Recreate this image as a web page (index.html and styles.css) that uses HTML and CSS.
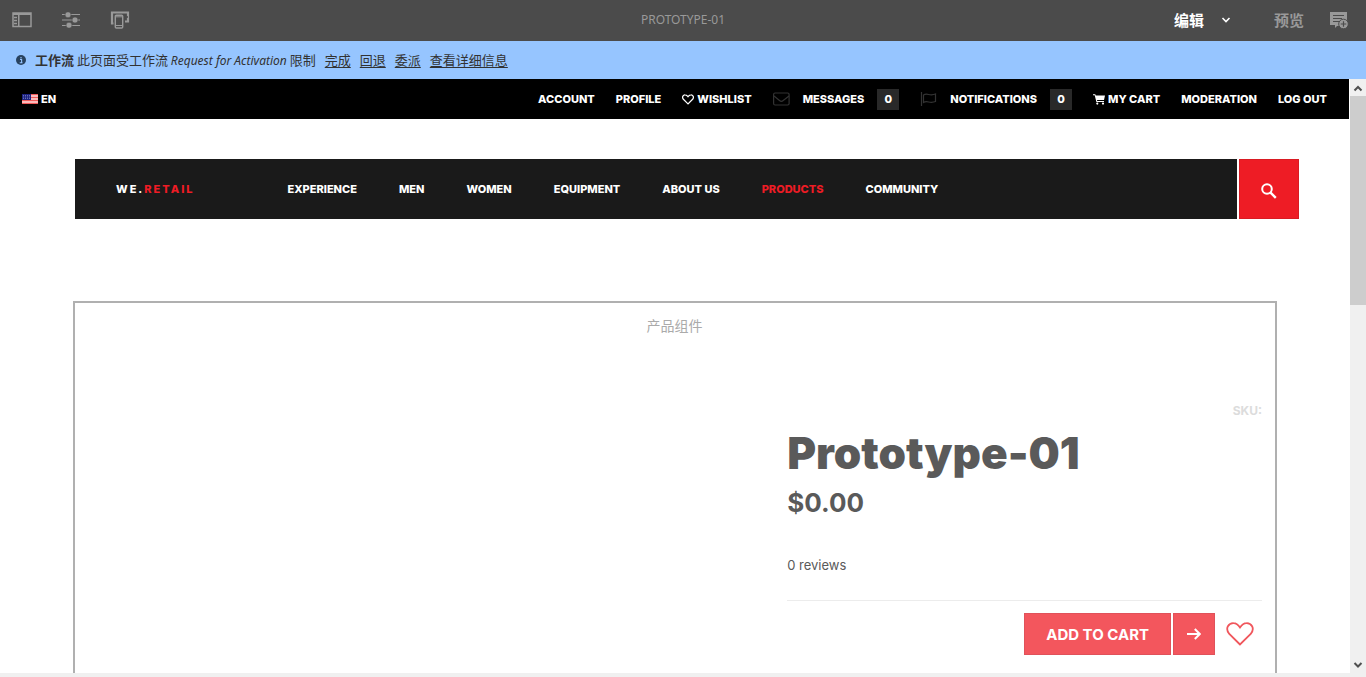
FILE: index.html
```html
<!DOCTYPE html>
<html lang="zh-CN">
<head>
<meta charset="utf-8">
<meta name="viewport" content="width=device-width, initial-scale=1">
<title>Prototype-01</title>
<link rel="stylesheet" href="styles.css">
</head>
<body>
<div class="editor">
  <header class="toolbar">
    <div class="tools">
      <button class="tool" type="button" aria-label="侧面板">
        <svg width="20" height="16" viewBox="0 0 20 16"><path d="M1 1h18v13.500H1z" fill="none" stroke="currentColor" stroke-width="1.500"/><path d="M1 1h18v2H1zM6 3h1.500v11H6z" fill="currentColor"/><path d="M2 5.500h3M2 8.500h3M2 11.500h3" stroke="currentColor" stroke-width="1.500"/></svg>
      </button>
      <button class="tool" type="button" aria-label="页面信息">
        <svg width="20" height="16" viewBox="0 0 20 16"><path d="M1 2.500h18M1 8h18M1 13.500h18" stroke="currentColor" stroke-width="1.200"/><g fill="currentColor" stroke="#4b4b4b" stroke-width=".6"><circle cx="7" cy="2.800" r="3"/><circle cx="14" cy="8" r="3"/><circle cx="8" cy="13.200" r="3"/></g></svg>
      </button>
      <button class="tool" type="button" aria-label="模拟器">
        <svg width="20" height="18" viewBox="0 0 20 18"><path d="M3.500 12.500H2v-11h16v9h-3" fill="none" stroke="currentColor" stroke-width="2.200"/><rect x="5.300" y="4.200" width="7.400" height="12.800" rx="1" fill="#4b4b4b" stroke="currentColor" stroke-width="1.400"/><path d="M5.500 5.800h7M5.500 14.500h7" stroke="currentColor" stroke-width="1"/><path d="M16 6h2" stroke="#4b4b4b" stroke-width="1.500"/></svg>
      </button>
    </div>
    <h1 class="page-name">PROTOTYPE-01</h1>
    <div class="modes">
      <button class="mode mode-active" type="button">编辑
        <svg width="10" height="6" viewBox="0 0 10 6"><path d="M1.500 1l3.500 3.500L8.500 1" fill="none" stroke="currentColor" stroke-width="1.600"/></svg>
      </button>
      <button class="mode" type="button">预览</button>
      <button class="tool" type="button" aria-label="注释">
        <svg width="20" height="18" viewBox="0 0 20 18"><path d="M1 1h17v8H14v6H8l-2 2v-3H1z" fill="currentColor"/><path d="M4 4.500h11M4 7.500h9M4 10.500h6" stroke="#4b4b4b" stroke-width="1.100"/><circle cx="14.500" cy="13" r="4.800" fill="currentColor" stroke="#4b4b4b"/><path d="M14.500 10.200v5.600M11.700 13h5.600" stroke="#4b4b4b" stroke-width="1.200"/></svg>
      </button>
    </div>
  </header>

  <div class="notice" role="status">
    <svg class="notice-icon" width="10" height="10" viewBox="0 0 10 10"><circle cx="5" cy="5" r="5" fill="#28425f"/><path d="M4 4.400h1.600V8M3.700 7.800h2.800M4.400 2.500h1.200" stroke="#96c5ff" stroke-width="1.100" fill="none"/></svg>
    <p class="notice-text"><strong>工作流</strong> 此页面受工作流 <em>Request for Activation</em> 限制</p>
    <a href="#complete">完成</a>
    <a href="#back">回退</a>
    <a href="#delegate">委派</a>
    <a href="#details">查看详细信息</a>
  </div>

  <div class="frame">
    <div class="site">
      <div class="account-bar">
        <a class="account-link language" href="#language">
          <svg width="16" height="10" viewBox="0 0 16 10"><path fill="#ffdcdc" d="M0 0h16v10H0z"/><path d="M0 .5h16M0 3.500h16M0 6.500h16M0 9.500h16" stroke="#f05a5a" stroke-width="1.500"/><path fill="#1d2280" d="M0 0h9v6H0z"/><path d="M1 1.500h7M1 3h7M1 4.500h7" stroke="#8890c8" stroke-width=".7" stroke-dasharray="1 1"/></svg>
          EN
        </a>
        <nav class="account-nav" aria-label="Account">
          <a class="account-link" href="#account">ACCOUNT</a>
          <a class="account-link" href="#profile">PROFILE</a>
          <a class="account-link" href="#wishlist">
            <svg width="12" height="11" viewBox="0 0 26 23"><path d="M13 21L3 11C-1 6 3 1 7 1.500c3 0 5 2.500 6 4 1-1.500 3-4 6-4 4-.5 8 4.500 4 9.500z" fill="none" stroke="currentColor" stroke-width="2.600"/></svg>
            WISHLIST
          </a>
          <a class="account-link counted" href="#messages">
            <svg class="dim" width="17" height="14" viewBox="0 0 17 14"><rect x=".6" y="1" width="15.500" height="12" rx="1.500" fill="none" stroke="currentColor" stroke-width="1.200"/><path d="M1 4l5.500 4.500c1.200 1 2.500 1 3.700 0L16 4" fill="none" stroke="currentColor" stroke-width="1.200"/></svg>
            MESSAGES <span class="count">0</span>
          </a>
          <a class="account-link counted" href="#notifications">
            <svg class="dim" width="17" height="14" viewBox="0 0 17 14"><path d="M1.500 0v14M3.500 3c4-2.500 6 1.500 12-1v7.500c-6 2.500-8-1.500-12 1z" fill="none" stroke="currentColor" stroke-width="1.200"/></svg>
            NOTIFICATIONS <span class="count">0</span>
          </a>
          <a class="account-link" href="#cart">
            <svg width="12" height="11" viewBox="0 0 12 11"><path d="M0 .3h2.300l.4 1.200H12L11 6H4l.2 1H11v1H3.400L1.700 1.300H0z" fill="currentColor"/><circle cx="4.300" cy="9.600" r="1.100" fill="currentColor"/><circle cx="10" cy="9.600" r="1.100" fill="currentColor"/></svg>
            MY CART
          </a>
          <a class="account-link" href="#moderation">MODERATION</a>
          <a class="account-link" href="#logout">LOG OUT</a>
        </nav>
      </div>

      <div class="masthead">
        <div class="menu-bar">
          <a class="brand" href="#home">WE.<span class="brand-accent">RETAIL</span></a>
          <nav class="menu" aria-label="Main">
            <a href="#experience">EXPERIENCE</a>
            <a href="#men">MEN</a>
            <a href="#women">WOMEN</a>
            <a href="#equipment">EQUIPMENT</a>
            <a href="#about">ABOUT US</a>
            <a class="current" href="#products">PRODUCTS</a>
            <a href="#community">COMMUNITY</a>
          </nav>
        </div>
        <button class="search" type="button" aria-label="Search">
          <svg width="16" height="16" viewBox="0 0 16 16"><circle cx="6" cy="6" r="4.800" fill="none" stroke="currentColor" stroke-width="2"/><path d="M9.300 9.300l5.500 5.500" stroke="currentColor" stroke-width="2.400"/></svg>
        </button>
      </div>

      <main class="product">
        <p class="component-label">产品组件</p>
        <div class="details">
          <p class="sku">SKU:</p>
          <h2 class="name">Prototype-01</h2>
          <p class="price">$0.00</p>
          <p class="reviews">0 reviews</p>
          <div class="actions">
            <button class="action add" type="button">ADD TO CART</button>
            <button class="action go" type="button" aria-label="Go to cart">
              <svg width="14" height="12" viewBox="0 0 14 12"><path d="M0 6h12.500M7.800 1l5 5-5 5" fill="none" stroke="currentColor" stroke-width="2"/></svg>
            </button>
            <button class="favourite" type="button" aria-label="Add to wishlist">
              <svg width="28" height="24" viewBox="0 0 28 24"><path d="M14 22.500L3.300 12C-1.500 6 3 1 7.500 1.200 11 1.200 13 4 14 5.500c1-1.500 3-4.300 6.500-4.300C25 1 29.500 6 24.700 12z" fill="none" stroke="currentColor" stroke-width="1.800"/></svg>
            </button>
          </div>
        </div>
      </main>
    </div>

    <div class="scrollbar" aria-hidden="true">
      <svg width="16" height="16" viewBox="0 0 16 16"><path d="M4.500 10.500L8 7l3.500 3.500" fill="none" stroke="#505050" stroke-width="2"/></svg>
      <div class="thumb"></div>
      <svg width="16" height="16" viewBox="0 0 16 16"><path d="M4.500 6L8 9.500 11.500 6" fill="none" stroke="#505050" stroke-width="2"/></svg>
    </div>
  </div>
</div>
</body>
</html>
```
FILE: styles.css
```css
* { box-sizing: border-box; }
body, h1, h2, p { margin: 0; }
body {
  background: #f0f0f0;
  color: #5a5a5a;
  font-family: Inter, "Noto Sans CJK SC", sans-serif;
}
a { color: inherit; text-decoration: none; }
button {
  padding: 0;
  border: 0;
  background: none;
  color: inherit;
  font: inherit;
  cursor: pointer;
}
svg { display: block; flex: none; }

.editor {
  display: flex;
  flex-direction: column;
  height: 100vh;
  padding-bottom: 4px;
}

/* Editor toolbar */
.toolbar {
  display: grid;
  grid-template-columns: 1fr auto 1fr;
  align-items: center;
  height: 41px;
  flex: none;
  padding: 0 12px 2px;
  background: #4b4b4b;
  color: #999;
}
.tools { display: flex; align-items: center; gap: 29px; }
.page-name {
  font: 400 12px/20px "Noto Sans", sans-serif;
}
.modes {
  display: flex;
  align-items: center;
  justify-content: flex-end;
  gap: 25px;
  padding-right: 5px;
}
.mode {
  display: flex;
  align-items: center;
  gap: 17px;
  font: 700 15px/20px "Noto Sans CJK SC", sans-serif;
}
.mode-active { margin-right: 18px; color: #fff; }

/* Workflow notice */
.notice {
  display: flex;
  align-items: center;
  gap: 9px;
  height: 38px;
  flex: none;
  padding: 0 16px;
  background: #96c5ff;
  color: #323232;
  font: 400 13px/20px "Noto Sans CJK SC", sans-serif;
}
.notice em { font: italic 400 12px/20px "Noto Sans", sans-serif; }
.notice a { text-decoration: underline; text-underline-offset: 2px; }

/* Framed page */
.frame { display: flex; flex: 1; min-height: 0; }
.site {
  flex: 1;
  min-width: 0;
  overflow: hidden;
  background: #fff;
}
.scrollbar {
  display: flex;
  flex-direction: column;
  width: 17px;
  padding-top: 1px;
  border-left: 1px solid #fff;
  background: #f0f0f0;
}
.thumb { height: 209px; margin-bottom: auto; background: #cdcdcd; }

.account-bar {
  display: flex;
  align-items: center;
  justify-content: space-between;
  height: 40px;
  padding: 0 22px;
  background: #000;
  color: #fff;
}
.account-nav { display: flex; align-items: center; gap: 21px; }
.account-link {
  display: flex;
  align-items: center;
  gap: 3px;
  font-size: 11px;
  font-weight: 800;
  line-height: 21px;
}
.counted { gap: 13px; }
.dim { color: #333; }
.count {
  width: 22px;
  background: #292929;
  text-align: center;
}

.masthead {
  display: flex;
  gap: 2px;
  padding: 40px 50px 0 75px;
}
.menu-bar {
  display: flex;
  align-items: center;
  gap: 93px;
  flex: 1;
  height: 60px;
  padding-left: 41px;
  background: #1a1a1a;
  color: #fff;
  font-size: 11px;
  font-weight: 800;
  line-height: 20px;
}
.brand { letter-spacing: 2px; }
.brand-accent, .current { color: #ee1c25; }
.menu { display: flex; gap: 42px; }
.search {
  display: grid;
  place-items: center;
  width: 60px;
  height: 60px;
  padding-top: 3px;
  border: 1px solid #d91b23;
  background: #ee1c25;
  color: #fff;
}

/* Product component */
.product {
  min-height: 500px;
  margin: 82px 72px 0 73px;
  padding: 12px 13px 0 0;
  border: 2px solid #b0b0b0;
}
.component-label {
  padding-left: 12px;
  color: #aaa;
  font: 400 14px/20px "Noto Sans CJK SC", sans-serif;
  text-align: center;
}
.details { width: 40%; margin: 66px 0 0 auto; }
.sku {
  color: #dcdcdc;
  font-size: 12px;
  font-weight: 700;
  line-height: 20px;
  text-align: right;
}
.name {
  font-size: 44px;
  font-weight: 900;
  line-height: 64px;
}
.price {
  padding-top: 2px;
  font-size: 26px;
  font-weight: 700;
  line-height: 32px;
}
.reviews {
  padding: 36px 0 25px;
  border-bottom: 1px solid #ececec;
  font-size: 13px;
  line-height: 20px;
}
.actions {
  display: flex;
  align-items: center;
  justify-content: flex-end;
  gap: 2px;
  padding: 12px 8px 0 0;
}
.action {
  display: grid;
  place-items: center;
  height: 42px;
  border: 1px solid #e0525a;
  background: #f3565d;
  color: #fff;
  font-size: 15px;
  font-weight: 700;
}
.add { padding: 0 21px; }
.go { width: 42px; }
.favourite { margin-left: 9px; color: #f0565c; }
```
